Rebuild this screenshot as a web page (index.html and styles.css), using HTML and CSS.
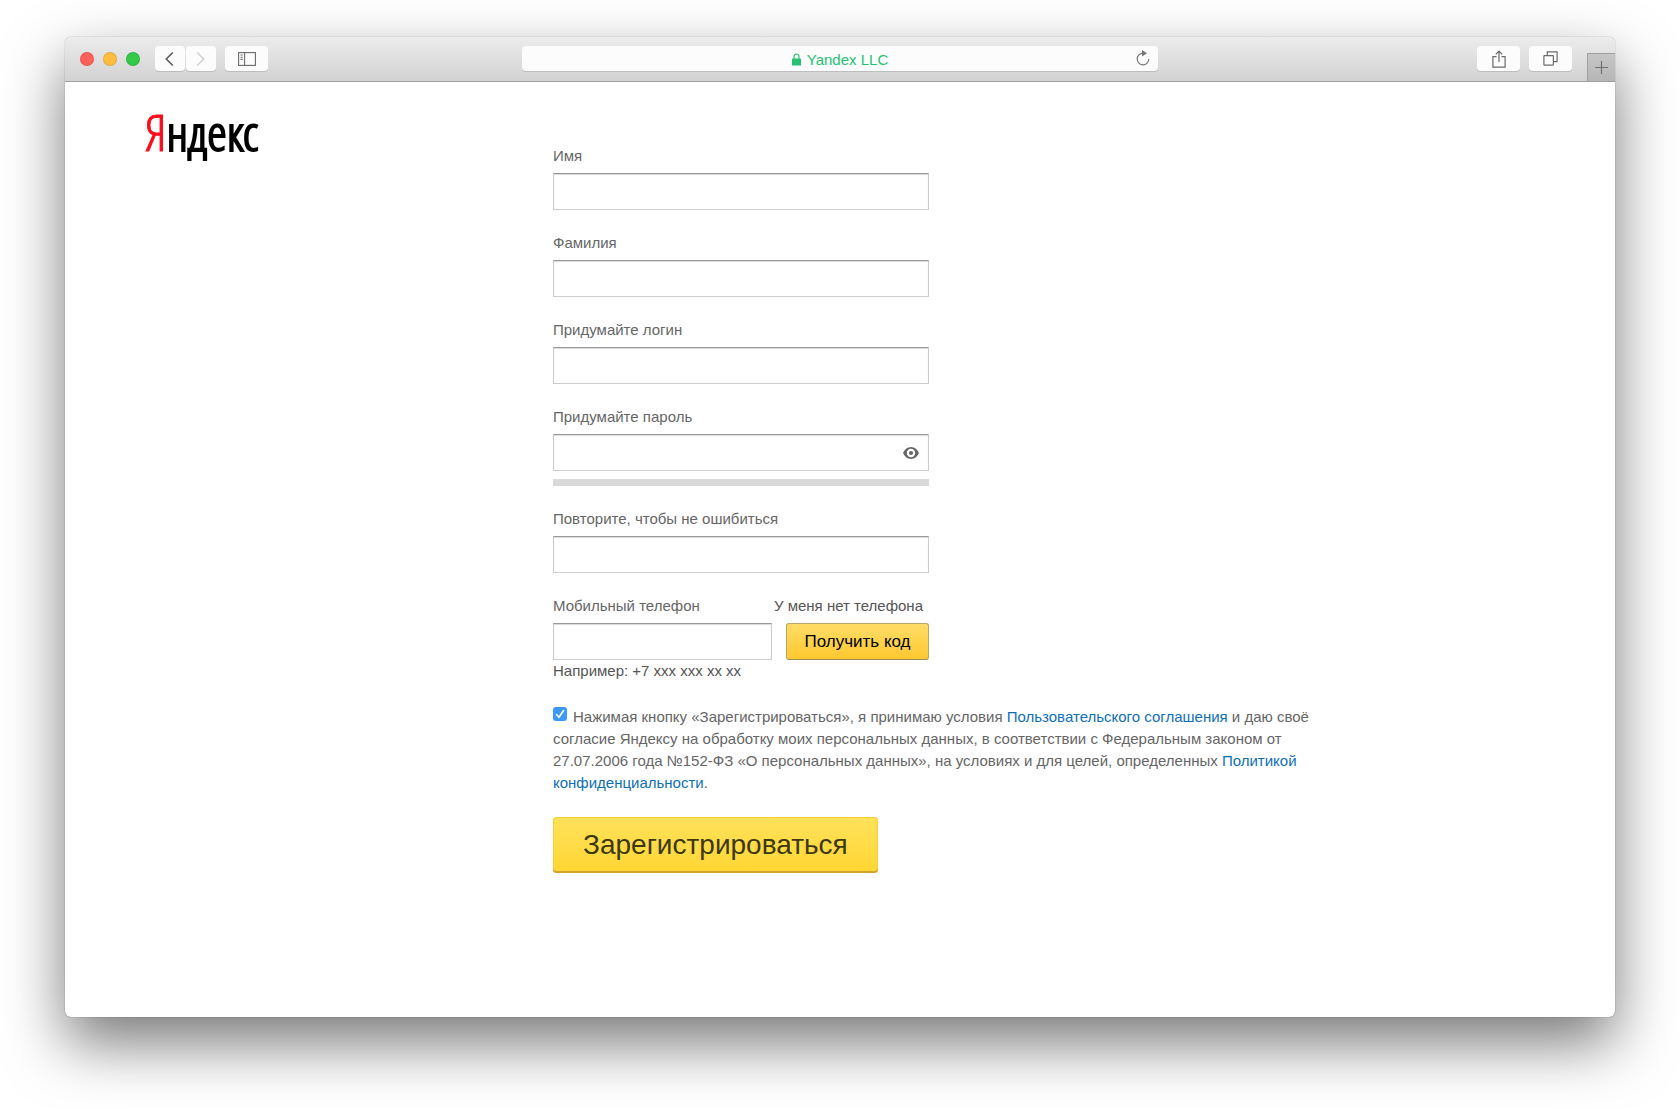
FILE: index.html
```html
<!DOCTYPE html>
<html lang="ru">
<head>
<meta charset="utf-8">
<meta name="viewport" content="width=device-width, initial-scale=1">
<title>Яндекс — Регистрация</title>
<link rel="stylesheet" href="styles.css">
</head>
<body>
<div class="window">
  <header class="toolbar">
    <div class="toolbar-left">
      <div class="lights">
        <button class="light light-close" type="button" aria-label="Закрыть"></button>
        <button class="light light-min" type="button" aria-label="Свернуть"></button>
        <button class="light light-max" type="button" aria-label="Развернуть"></button>
      </div>
      <div class="nav">
        <button class="tool tool-nav" type="button" aria-label="Назад">
          <svg width="10" height="16" viewBox="0 0 10 16" fill="none" stroke="#5c5c5c" stroke-width="1.6"><path d="M7.800 1.500 1.300 8l6.500 6.500"/></svg>
        </button>
        <button class="tool tool-nav" type="button" aria-label="Вперёд">
          <svg width="10" height="16" viewBox="0 0 10 16" fill="none" stroke="#cfcfcf" stroke-width="1.4"><path d="M1.200 1.500 7.700 8l-6.500 6.500"/></svg>
        </button>
      </div>
      <button class="tool" type="button" aria-label="Боковая панель">
        <svg width="18" height="14" viewBox="0 0 18 14" fill="none" stroke="#6a6a6a" stroke-width="1.1"><rect x=".6" y=".6" width="16.800" height="12.800"/><path d="M6.600.6v12.800M2.500 3h2.200M2.500 5.200h2.200M2.500 7.400h2.200"/></svg>
      </button>
    </div>
    <button class="address" type="button">
      <span></span>
      <span class="site">
        <svg width="9" height="13" viewBox="0 0 9 13"><path d="M2 6V3.500a2.500 2.500 0 0 1 5 0V6" fill="none" stroke="#25c274" stroke-width="1.200"/><rect y="5.500" width="9" height="7" rx=".6" fill="#25c274"/></svg>
        Yandex LLC
      </span>
      <svg class="reload" width="14" height="18" viewBox="0 0 14 18"><path d="M7 4.200a5.800 5.800 0 1 0 5.800 5.800" fill="none" stroke="#757575" stroke-width="1.200"/><path d="M6 1v6.400l5-3.200z" fill="#757575"/></svg>
    </button>
    <div class="toolbar-right">
      <button class="tool" type="button" aria-label="Поделиться">
        <svg width="14" height="18" viewBox="0 0 14 18" fill="none" stroke="#6a6a6a" stroke-width="1.200"><path d="M4.500 6.600H.9v10.500h12.200V6.600H9.500M7 12V1.200M3.800 4.300 7 1.100l3.200 3.200"/></svg>
      </button>
      <button class="tool" type="button" aria-label="Показать вкладки">
        <svg width="15" height="15" viewBox="0 0 15 15" fill="none" stroke="#6a6a6a" stroke-width="1.200"><rect x=".9" y="4.600" width="9.500" height="9.500" rx=".5"/><path d="M4.300 4.200V.9h9.800v9.800h-3.300"/></svg>
      </button>
      <button class="new-tab" type="button" aria-label="Новая вкладка">
        <svg width="13" height="13" viewBox="0 0 13 13" stroke="#707070" stroke-width="1.200"><path d="M6.500 0v13M0 6.500h13"/></svg>
      </button>
    </div>
  </header>

  <main class="page">
    <a class="logo" href="#"><span class="logo-first">Я</span>ндекс</a>
    <form class="form">
      <div class="field">
        <label for="firstname">Имя</label>
        <input class="input" id="firstname" type="text">
      </div>
      <div class="field">
        <label for="lastname">Фамилия</label>
        <input class="input" id="lastname" type="text">
      </div>
      <div class="field">
        <label for="login">Придумайте логин</label>
        <input class="input" id="login" type="text">
      </div>
      <div class="field">
        <label for="password">Придумайте пароль</label>
        <div class="password">
          <input class="input" id="password" type="password">
          <button class="eye" type="button" aria-label="Показать пароль">
            <svg width="16" height="12" viewBox="0 0 16 12"><path fill="#666" fill-rule="evenodd" d="M0 6C1.800 2.200 4.500 0 8 0s6.200 2.200 8 6c-1.800 3.800-4.500 6-8 6S1.800 9.800 0 6zm8-4.200a4.200 4.200 0 1 0 0 8.400 4.200 4.200 0 0 0 0-8.400z"/><circle cx="8" cy="6" r="2.100" fill="#666"/></svg>
          </button>
        </div>
        <div class="strength"></div>
      </div>
      <div class="field">
        <label for="repeat">Повторите, чтобы не ошибиться</label>
        <input class="input" id="repeat" type="password">
      </div>
      <div class="field field-phone">
        <div class="phone-head">
          <label for="phone">Мобильный телефон</label>
          <a class="no-phone" href="#">У меня нет телефона</a>
        </div>
        <div class="phone-row">
          <input class="input" id="phone" type="tel">
          <button class="code" type="button">Получить код</button>
        </div>
      </div>
      <p class="hint">Например: +7 xxx xxx xx xx</p>
      <p class="terms"><input class="check" id="agree" type="checkbox" checked><label for="agree">Нажимая кнопку «Зарегистрироваться», я принимаю условия <a href="#">Пользовательского соглашения</a> и даю своё согласие Яндексу на обработку моих персональных данных, в соответствии с Федеральным законом от 27.07.2006 года №152-ФЗ «О персональных данных», на условиях и для целей, определенных <a href="#">Политикой конфиденциальности</a>.</label></p>
      <button class="submit" type="submit">Зарегистрироваться</button>
    </form>
  </main>
</div>
</body>
</html>
```

FILE: styles.css
```css
* {
  box-sizing: border-box;
}

body {
  margin: 0;
  background: #fff;
  color: #666;
  font: 15px/22px "Liberation Sans", Arial, sans-serif;
  overflow-x: hidden;
}

button,
input {
  margin: 0;
  font-family: inherit;
}

button {
  padding: 0;
  border: 0;
  cursor: pointer;
}

svg {
  display: block;
}

.window {
  display: flex;
  flex-direction: column;
  min-height: calc(100vh - 130px);
  margin: 37px 65px 93px;
  border-radius: 6px;
  background: #fff;
  box-shadow: 0 0 1px rgba(0, 0, 0, .6), 0 26px 60px rgba(0, 0, 0, .53);
}

/* Browser toolbar */

.toolbar {
  display: grid;
  grid-template-columns: 1fr minmax(160px, 636px) 1fr;
  height: 45px;
  border-bottom: 1px solid #a0a0a0;
  border-radius: 6px 6px 0 0;
  background: linear-gradient(#ececec, #d2d2d2);
  overflow: hidden;
}

.toolbar-left,
.toolbar-right {
  display: flex;
  align-items: flex-start;
  gap: 9px;
  padding-top: 9px;
}

.toolbar-left {
  padding-left: 15px;
}

.toolbar-right {
  justify-content: flex-end;
}

.lights {
  display: flex;
  gap: 9px;
  padding: 6px 6px 0 0;
}

.light {
  width: 14px;
  height: 14px;
  border: 1px solid rgba(0, 0, 0, .1);
  border-radius: 50%;
}

.light-close {
  background: #ff605a;
}

.light-min {
  background: #ffbd40;
}

.light-max {
  background: #34ca49;
}

.nav {
  display: flex;
  gap: 1px;
}

.tool {
  display: flex;
  align-items: center;
  justify-content: center;
  width: 43px;
  height: 25px;
  border-radius: 4px;
  background: #fcfcfc;
  box-shadow: 0 1px 0 #bdbdbd;
}

.tool-nav {
  width: 30px;
}

.address {
  display: grid;
  grid-template-columns: 1fr auto 1fr;
  align-items: center;
  height: 25px;
  margin-top: 9px;
  padding: 1px 8px 0;
  border-radius: 4px;
  background: #fcfcfc;
  box-shadow: 0 1px 0 #bdbdbd;
}

.site {
  display: flex;
  align-items: center;
  gap: 6px;
  color: #25c274;
  font-size: 15px;
}

.reload {
  align-self: start;
  justify-self: end;
  margin-top: 2px;
}

.new-tab {
  display: flex;
  align-items: center;
  justify-content: center;
  width: 28px;
  height: 28px;
  margin: 7px 0 0 6px;
  border: solid #a0a0a0;
  border-width: 1px 0 0 1px;
  background: linear-gradient(#c6c6c6, #b6b6b6);
}

/* Registration page */

.page {
  display: grid;
  grid-template-columns: minmax(120px, 408px) minmax(0, 765px);
  flex: 1;
  padding: 0 80px;
}

.logo {
  align-self: start;
  margin-top: 20px;
  color: #000;
  font: 50px/60px "Open Sans Condensed Light", "Open Sans Condensed", sans-serif;
  -webkit-text-stroke: 2px currentColor;
  text-decoration: none;
}

.logo-first {
  color: #fc0d1b;
  -webkit-text-stroke-width: 1px;
}

.form {
  padding: 63px 0 144px;
}

.field {
  display: flex;
  flex-direction: column;
  gap: 6px;
  width: 376px;
  max-width: 100%;
  margin-bottom: 22px;
}

.field-phone {
  margin-bottom: 0;
}

.input {
  width: 100%;
  height: 37px;
  padding: 0 10px;
  border: 1px solid #ccc;
  border-top-color: #999;
  border-radius: 0;
  background: #fff;
  box-shadow: inset 0 1px 1px rgba(0, 0, 0, .15);
  font-size: 16px;
}

.password {
  position: relative;
}

.eye {
  position: absolute;
  top: 0;
  right: 0;
  display: flex;
  align-items: center;
  justify-content: center;
  width: 37px;
  height: 37px;
  background: none;
}

.strength {
  height: 7px;
  margin-top: 2px;
  background: #dadada;
}

.phone-head {
  display: flex;
  justify-content: space-between;
  padding-right: 6px;
}

.no-phone {
  color: #555;
  text-decoration: none;
}

.phone-row {
  display: grid;
  grid-template-columns: 1fr 143px;
  gap: 14px;
}

.code {
  height: 37px;
  border: 1px solid #b9a46a;
  border-bottom-color: #9c8a55;
  border-radius: 3px;
  background: linear-gradient(#ffdc68, #ffc92f);
  color: #000;
  font-size: 17px;
}

.hint {
  margin: 0 0 24px;
  color: #555;
}

.terms {
  margin: 0 0 23px;
}

.terms a {
  color: #0e6fb9;
  text-decoration: none;
}

.check {
  width: 14px;
  height: 14px;
  margin-right: 6px;
  border-radius: 3px;
  background: #3d98f8 url("data:image/svg+xml,%3Csvg xmlns='http://www.w3.org/2000/svg' viewBox='0 0 14 14'%3E%3Cpath d='M3.500 7.500 6 10.300 10.600 3.500' fill='none' stroke='white' stroke-width='1.600' stroke-linecap='round'/%3E%3C/svg%3E");
  appearance: none;
  vertical-align: 1px;
}

.submit {
  height: 56px;
  padding: 0 30px;
  border-radius: 4px;
  background: linear-gradient(#ffe25b, #ffd633);
  box-shadow: inset 0 -2px 0 #d3a52c, inset 0 0 0 1px #f5cf3d;
  color: #3f370f;
  font-size: 28px;
}
```
